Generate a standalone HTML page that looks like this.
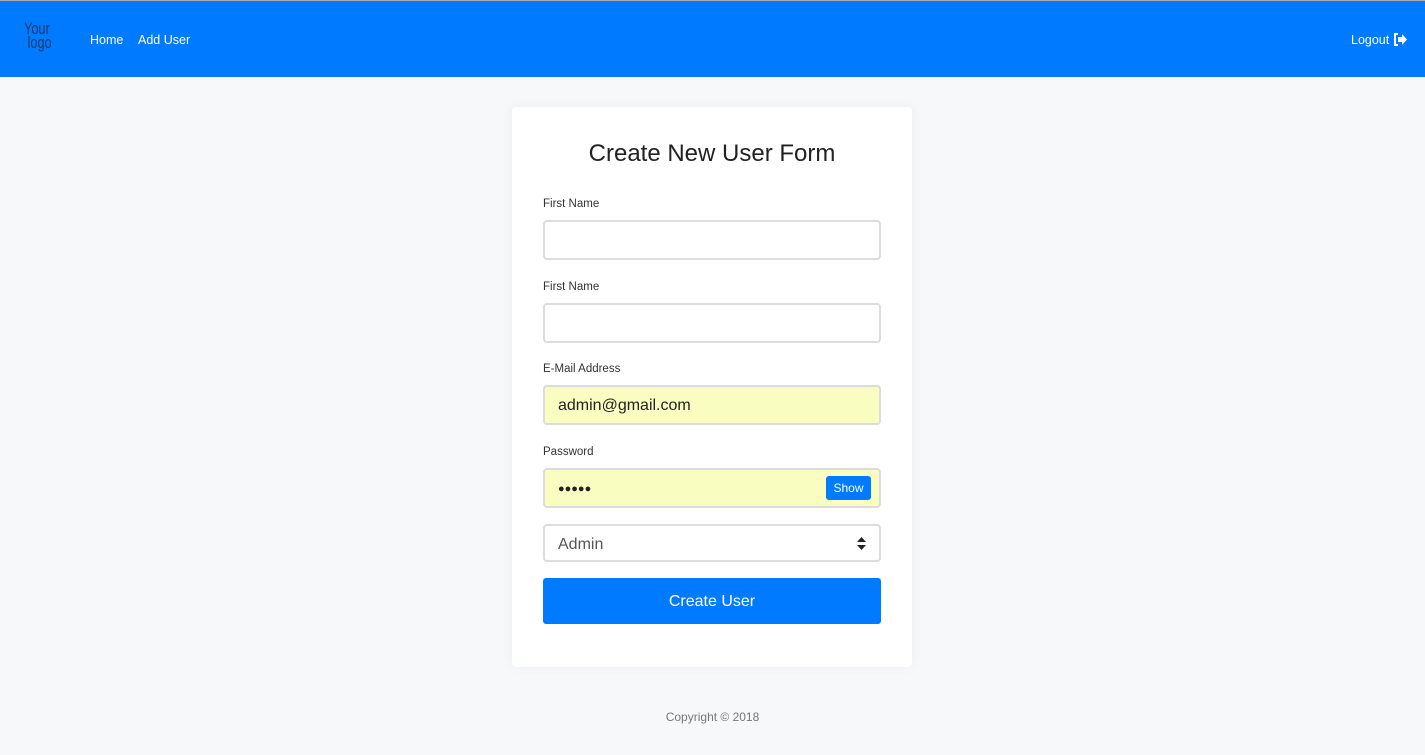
<!DOCTYPE html>
<html><head><style>
*{box-sizing:border-box;margin:0;padding:0}
body{width:1425px;height:755px;background:#f7f8fa;font-family:"Liberation Sans",sans-serif;position:relative;overflow:hidden}
.line{position:absolute;top:0;left:0;width:1425px;height:1px;background:#aaa}
.nav{position:absolute;top:1px;left:0;width:1425px;height:76px;background:#007bff;color:#fff}
.logo{position:absolute;left:24px;top:21px;font-family:"Liberation Sans Narrow","Liberation Sans",sans-serif;color:#1e3a66;font-size:17px;line-height:14px;transform:scaleX(.75);transform-origin:left}
.nav a{position:absolute;top:32px;font-size:12.5px;color:#fff}
.card{position:absolute;left:512px;top:107px;width:400px;height:560px;background:#fff;border-radius:4px;box-shadow:0 0 12px rgba(0,0,0,.05)}
h1{position:absolute;top:140px;left:512px;width:400px;text-align:center;font-size:24px;font-weight:normal;color:#222}
label{position:absolute;left:543px;font-size:11.5px;color:#333}
.in{position:absolute;left:543px;width:338px;height:40px;border:2px solid #dcdcdc;border-radius:4px;background:#fff;font-size:16px;color:#222;padding-left:13px;line-height:38px}
.y{background:#fafdc0}
.btn{position:absolute;left:543px;top:578px;width:338px;height:46px;background:#007bff;border-radius:3px;color:#fff;font-size:16px;text-align:center;line-height:47px}
.show{position:absolute;left:826px;top:476px;width:45px;height:24px;background:#007bff;border-radius:3px;color:#fff;font-size:12px;text-align:center;line-height:24px}
.foot{position:absolute;top:710px;left:0;width:1425px;text-align:center;font-size:12px;color:#777}
</style></head><body>
<div class="line"></div>
<div class="nav">
<div class="logo">Your<br>&nbsp;logo</div>
<a style="left:90px">Home</a><a style="left:138px">Add User</a>
<a style="left:1351px">Logout <svg width="15" height="13" viewBox="0 0 15 13" style="vertical-align:-2px"><path d="M5 1H2v11h3" fill="none" stroke="#fff" stroke-width="2"/><path d="M5 4h4V1l5 5.5-5 5.5V9H5z" fill="#fff"/></svg></a>
</div>
<div class="card"></div>
<h1>Create New User Form</h1>
<label style="top:198px">First Name</label><div class="in" style="top:220px"></div>
<label style="top:281px">First Name</label><div class="in" style="top:303px"></div>
<label style="top:363px">E-Mail Address</label><div class="in y" style="top:385px">admin@gmail.com</div>
<label style="top:446px">Password</label><div class="in y" style="top:468px;font-size:11px">●●●●●</div>
<div class="show">Show</div>
<div class="in" style="top:524px;height:38px;line-height:37px;color:#555">Admin<svg width="9" height="13" viewBox="0 0 9 13" style="position:absolute;right:13px;top:11px"><path d="M4.5 0L9 5H0zM4.5 13L0 8h9z" fill="#222"/></svg></div>
<div class="btn">Create User</div>
<div class="foot">Copyright © 2018</div>
</body></html>
